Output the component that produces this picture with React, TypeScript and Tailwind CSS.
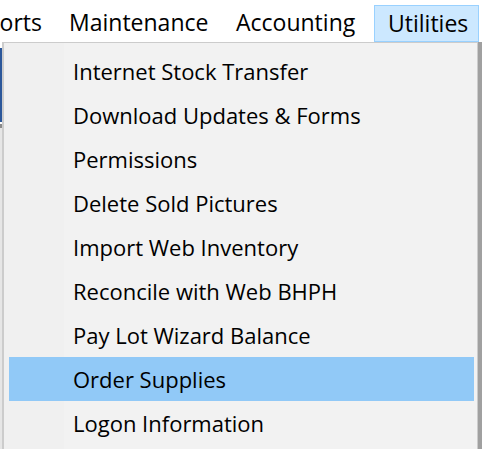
import React from "react";

const items = [
  "Internet Stock Transfer",
  "Download Updates & Forms",
  "Permissions",
  "Delete Sold Pictures",
  "Import Web Inventory",
  "Reconcile with Web BHPH",
  "Pay Lot Wizard Balance",
  "Order Supplies",
  "Logon Information",
];

const font = { fontFamily: '"Open Sans", "Noto Sans", sans-serif' };

export default function App() {
  return (
    <div
      className="relative w-[482px] h-[449px] overflow-hidden bg-white text-black"
      style={font}
    >
      {/* menu bar */}
      <div className="flex h-[42px] items-stretch text-[23px]">
        <div className="flex w-[56px] justify-end items-center overflow-hidden pr-[14px] pt-[3px] whitespace-nowrap">
          <span>Reports</span>
        </div>
        <div className="flex w-[167px] items-center pl-[13px] pt-[3px] whitespace-nowrap">Maintenance</div>
        <div className="flex w-[151px] items-center pl-[13px] pt-[3px] whitespace-nowrap">Accounting</div>
        <div className="mt-[5px] flex w-[105px] items-center border border-[#99d1ff] bg-[#cce8ff] pl-[13px] whitespace-nowrap">
          Utilities
        </div>
      </div>

      {/* underlying window bits */}
      <div className="flex h-[407px]">
        <div className="flex w-[2px] flex-col">
          <div className="h-[6px] bg-white" />
          <div className="h-[74px] bg-[#2b579a]" />
          <div className="h-[2px] bg-white" />
          <div className="h-[4px] bg-[#8a8a8a]" />
          <div className="flex-1 bg-[#e6e6e6]" />
        </div>
        <div className="flex-1" />
        <div className="w-[4px] bg-[#a0a0a0]" />
      </div>

      {/* dropdown */}
      <div className="absolute left-[2px] top-[42px] h-[420px] w-[476px] border border-l-2 border-[#cccccc] bg-[#f2f2f2] pt-[6px] pl-[5px] pr-[3px] text-[22px]">
        <div className="absolute left-0 top-0 bottom-0 w-[60px] bg-[#f0f0f0]" />
        <div className="relative flex flex-col">
          {items.map((t) => (
            <div
              key={t}
              className={
                "flex h-[44px] items-center pl-[64px] whitespace-nowrap " +
                (t === "Order Supplies" ? "bg-[#91c9f7]" : "")
              }
            >
              {t}
            </div>
          ))}
        </div>
      </div>
    </div>
  );
}
